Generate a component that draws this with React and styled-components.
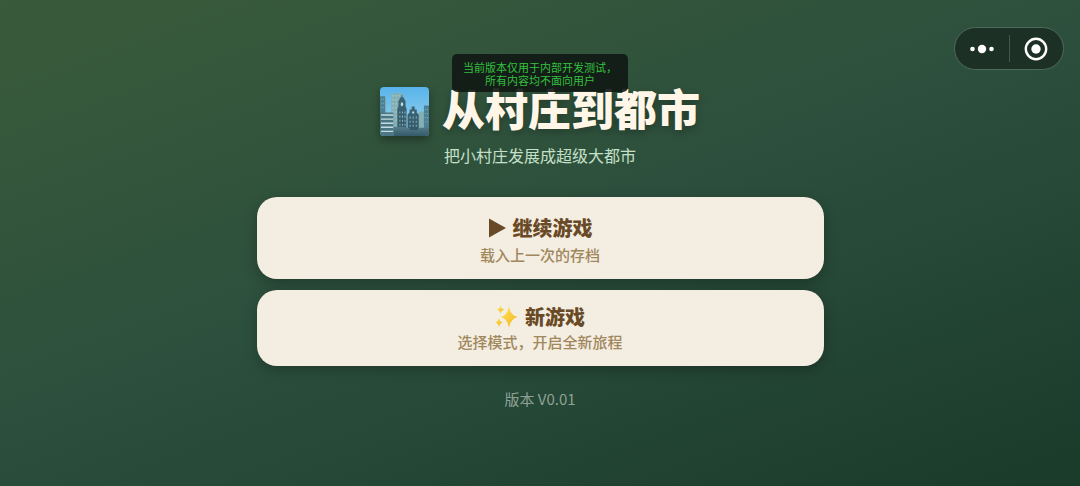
import React from 'react';
import styled, { createGlobalStyle } from 'styled-components';

const GlobalStyle = createGlobalStyle`
  * {
    box-sizing: border-box;
  }

  body {
    margin: 0;
    font-family: "Noto Sans CJK SC", "Noto Sans", sans-serif;
  }
`

const Page = styled.div`
  position: relative;
  min-height: 100vh;
  padding: 26px 24px 24px;
  display: flex;
  flex-direction: column;
  align-items: center;
  justify-content: center;
  background: linear-gradient(160deg, #3a5b3a 0%, #2c4f3d 50%, #1a3a2a 100%);
`

const DevNotice = styled.div`
  position: absolute;
  z-index: 2;
  top: 54px;
  left: 50%;
  transform: translateX(-50%);
  padding: 7px 11px 5px;
  border-radius: 5px;
  background: rgba(17, 24, 20, 0.9);
  color: #35c03f;
  font-size: 11px;
  line-height: 13px;
  text-align: center;
  white-space: nowrap;
`

const Capsule = styled.div`
  position: absolute;
  z-index: 2;
  top: 27px;
  right: 16px;
  display: flex;
  align-items: center;
  height: 43px;
  border: 1px solid #4f6a5a;
  border-radius: 22px;
  background: #1d3025;
`

const CapsuleButton = styled.button`
  display: flex;
  align-items: center;
  justify-content: center;
  width: 54px;
  height: 100%;
  padding: 0;
  border: 0;
  background: none;
  cursor: pointer;

  & + & {
    position: relative;
  }

  & + &::before {
    content: "";
    position: absolute;
    left: 0;
    top: 7px;
    bottom: 7px;
    width: 1px;
    background: #47574d;
  }
`

const Header = styled.header`
  display: flex;
  align-items: flex-end;
  gap: 13px;
`

const CityIcon = styled.svg`
  width: 49px;
  height: 49px;
  border-radius: 4px;
  box-shadow: 0 4px 10px rgba(0, 0, 0, 0.35);
`

const Title = styled.h1`
  margin: 0;
  color: #fff6e8;
  font-size: 43px;
  font-weight: 900;
  line-height: 58px;
  text-shadow: 0 3px 8px rgba(0, 0, 0, 0.3);
`

const Subtitle = styled.p`
  margin: 7px 0 30px;
  color: #c5e0c8;
  font-size: 16px;
  line-height: 24px;
`

const Menu = styled.main`
  display: flex;
  flex-direction: column;
  gap: 11px;
  width: 100%;
  max-width: 567px;
`

const MenuButton = styled.button`
  display: flex;
  flex-direction: column;
  align-items: center;
  gap: ${props => props.$primary ? "2px" : "0"};
  padding: ${props => props.$primary ? "17px 20px 13px" : "13px 20px"};
  border: 0;
  border-radius: 20px;
  background: #f4ede1;
  box-shadow: 0 4px 14px rgba(0, 0, 0, 0.25);
  font-family: inherit;
  cursor: pointer;
`

const MenuTitle = styled.span`
  display: flex;
  align-items: center;
  gap: 7px;
  color: #694a26;
  font-size: 20px;
  font-weight: 900;
  line-height: 28px;
`

const MenuHint = styled.span`
  color: #a0875c;
  font-size: 15px;
  font-weight: 500;
  line-height: 22px;
`

const Version = styled.footer`
  margin-top: 22px;
  color: #8fa196;
  font-size: 15px;
  line-height: 22px;
`

function City() {
    return (
        <CityIcon viewBox="0 0 48 48" aria-hidden="true">
            <defs>
                <linearGradient id="sky" x1="0" y1="0" x2="0" y2="1">
                    <stop offset="0" stopColor="#58b3ea" />
                    <stop offset="1" stopColor="#a1d9ef" />
                </linearGradient>
                <linearGradient id="near" x1="0" y1="0" x2="0" y2="1">
                    <stop offset="0" stopColor="#3d6577" />
                    <stop offset="1" stopColor="#335866" />
                </linearGradient>
                <linearGradient id="ground" x1="0" y1="0" x2="0" y2="1">
                    <stop offset="0" stopColor="#557d88" />
                    <stop offset="1" stopColor="#34596a" />
                </linearGradient>
            </defs>
            <rect width="48" height="48" fill="url(#sky)" />
            <path d="M0 10h6v16H0zM11 6h11v33H11zM38 24h6v24h-6z" fill="#84b0b4" />
            <path d="M12 8.500h9M12 12.500h9M12 16.500h9M12 20.500h9M12 24.500h9M12 28.500h9M12 32.500h9" stroke="#9cc4c8" strokeWidth="1.500" strokeDasharray="1.500 1.500" />
            <path d="M0 9h5v17H0zM43 18h5v30h-5z" fill="#4d8195" />
            <path d="M1 12h4M1 16h4M1 20h4M44 22h4M44 26h4M44 30h4M44 34h4" stroke="#7dabb8" strokeDasharray="1 1" />
            <path d="M17 43V21l1-2v-5l1-2 1-2h1V8h1v2h1l2 4v5l1 2v22z" fill="url(#near)" />
            <path d="M27 45V27l2-2v-3h2v-3h3v3h2v3l2 2v18z" fill="url(#near)" />
            <path d="M19.500 24v14M22 24v14M24.500 24v14" stroke="#86b0be" strokeDasharray="2 2" />
            <path d="M29.500 29v11M32.500 29v11M35.500 29v11" stroke="#86aeb8" strokeDasharray="2 2" />
            <ellipse cx="21.500" cy="17" rx="1.200" ry="2" fill="#b8dce4" />
            <path d="M31.500 25h2" stroke="#b8dce4" strokeWidth="2" />
            <path d="M0 25h13v23H0z" fill="#4b7785" />
            <path d="M1 27.500h12M1 31.500h12M1 35.500h12M1 39.500h12M1 43.500h12" stroke="#c4dcdf" strokeWidth="1.400" />
            <path d="M13 39h12v1h4v2h9v-2h10v8H13z" fill="url(#ground)" />
        </CityIcon>
    );
}

function Play() {
    return (
        <svg width="18" height="20" viewBox="0 0 18 20" aria-hidden="true">
            <path d="M1 .5v19l17-9.500z" fill="#694a26" />
        </svg>
    );
}

function Sparkles() {
    return (
        <svg width="23" height="24" viewBox="0 0 23 24" aria-hidden="true">
            <defs>
                <linearGradient id="gold" x1="0" y1="0" x2="1" y2="1">
                    <stop offset="0" stopColor="#fee45c" />
                    <stop offset="1" stopColor="#f3b51b" />
                </linearGradient>
            </defs>
            <g fill="url(#gold)">
                <path d="M14 1.500Q15.500 10.500 22.800 12Q15.500 13.500 14 22.500Q12.500 13.500 5.500 12Q12.500 10.500 14 1.500Z" />
                <path d="M5.500 1Q6 4 9 4.700Q6 5.400 5.500 8.500Q5 5.400 2 4.700Q5 4 5.500 1Z" />
                <path d="M4 13Q4.900 16.800 8 17.500Q4.900 18.200 4 22Q3.100 18.200 0 17.500Q3.100 16.800 4 13Z" />
            </g>
        </svg>
    );
}

function App() {
    return (
        <Page>
            <GlobalStyle />
            <DevNotice>
                当前版本仅用于内部开发测试，<br />
                所有内容均不面向用户
            </DevNotice>
            <Capsule>
                <CapsuleButton aria-label="更多">
                    <svg width="24" height="10" viewBox="0 0 24 10" fill="#fff">
                        <circle cx="2.500" cy="5" r="2.300" />
                        <circle cx="12" cy="5" r="4.200" />
                        <circle cx="21.500" cy="5" r="2.300" />
                    </svg>
                </CapsuleButton>
                <CapsuleButton aria-label="关闭">
                    <svg width="24" height="24" viewBox="0 0 24 24" fill="#fff">
                        <circle cx="12" cy="12" r="10.200" fill="none" stroke="#fff" strokeWidth="2.400" />
                        <circle cx="12" cy="12" r="4.700" />
                    </svg>
                </CapsuleButton>
            </Capsule>
            <Header>
                <City />
                <Title>从村庄到都市</Title>
            </Header>
            <Subtitle>把小村庄发展成超级大都市</Subtitle>
            <Menu>
                <MenuButton $primary>
                    <MenuTitle><Play />继续游戏</MenuTitle>
                    <MenuHint>载入上一次的存档</MenuHint>
                </MenuButton>
                <MenuButton>
                    <MenuTitle><Sparkles />新游戏</MenuTitle>
                    <MenuHint>选择模式，开启全新旅程</MenuHint>
                </MenuButton>
            </Menu>
            <Version>版本 V0.01</Version>
        </Page>
    );
}

export default App;
